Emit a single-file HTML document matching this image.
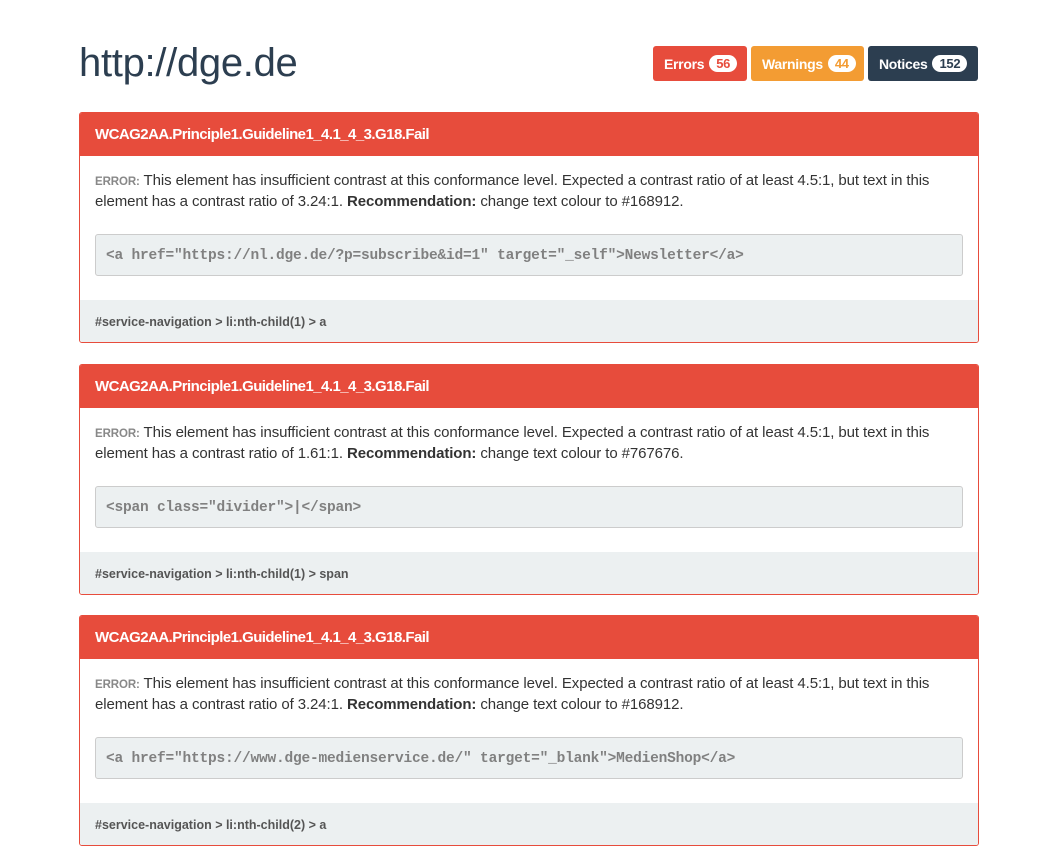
<!DOCTYPE html>
<html><head><meta charset="utf-8"><style>
*{box-sizing:border-box;margin:0;padding:0}
body{width:1048px;height:860px;background:#fff;font-family:"Liberation Sans",sans-serif;color:#333;position:relative;overflow:hidden}
h1{position:absolute;left:79px;top:41px;font-size:40px;font-weight:normal;color:#2c3e50;letter-spacing:-0.3px}
.badges{position:absolute;top:46px;right:70px;display:flex;gap:4px}
.b{height:35px;border-radius:3px;color:#fff;font-size:14px;font-weight:bold;display:flex;align-items:center;padding:0 11px;letter-spacing:-0.3px}
.b span{background:#fff;border-radius:10px;font-size:13px;padding:1px 7px;margin-left:5px}
.e{background:#e74c3c}.e span{color:#e74c3c}
.w{background:#f39c33}.w span{color:#f39c33}
.n{background:#2c3e50}.n span{color:#2c3e50}
.p{position:absolute;left:79px;width:900px;height:231px;border:1px solid #e74c3c;border-radius:3px;overflow:hidden}
.h{background:#e74c3c;color:#fff;height:43px;padding:0 15px;font-size:15px;font-weight:bold;line-height:43px;letter-spacing:-0.55px}
.t{padding:15px 15px 0;font-size:15px;line-height:20px;height:78px;letter-spacing:-0.1px;white-space:nowrap}
.t .l{color:#888;font-size:11.5px;font-weight:bold}
.c{margin:0 15px;height:42px;background:#ecf0f1;border:1px solid #ccc;border-radius:3px;font-family:"Liberation Mono",monospace;font-size:14.5px;font-weight:bold;color:#808080;line-height:42px;padding:0 10px;letter-spacing:-0.2px}
.f{position:absolute;left:0;right:0;bottom:0;height:42px;background:#ecf0f1;font-size:12.5px;font-weight:bold;color:#555;padding:0 15px;line-height:44px;letter-spacing:0px}
</style></head><body>
<h1>http://dge.de</h1>
<div class="badges">
<div class="b e" style="width:94px">Errors<span>56</span></div>
<div class="b w" style="width:113px">Warnings<span>44</span></div>
<div class="b n" style="width:110px">Notices<span>152</span></div>
</div>
<div class="p" style="top:112px"><div class="h">WCAG2AA.Principle1.Guideline1_4.1_4_3.G18.Fail</div>
<div class="t"><span class="l">ERROR:</span> This element has insufficient contrast at this conformance level. Expected a contrast ratio of at least 4.5:1, but text in this<br>element has a contrast ratio of 3.24:1. <b>Recommendation:</b> change text colour to #168912.</div>
<div class="c">&lt;a href="https://nl.dge.de/?p=subscribe&amp;id=1" target="_self"&gt;Newsletter&lt;/a&gt;</div>
<div class="f">#service-navigation &gt; li:nth-child(1) &gt; a</div></div>
<div class="p" style="top:364px"><div class="h">WCAG2AA.Principle1.Guideline1_4.1_4_3.G18.Fail</div>
<div class="t"><span class="l">ERROR:</span> This element has insufficient contrast at this conformance level. Expected a contrast ratio of at least 4.5:1, but text in this<br>element has a contrast ratio of 1.61:1. <b>Recommendation:</b> change text colour to #767676.</div>
<div class="c">&lt;span class="divider"&gt;|&lt;/span&gt;</div>
<div class="f">#service-navigation &gt; li:nth-child(1) &gt; span</div></div>
<div class="p" style="top:615px"><div class="h">WCAG2AA.Principle1.Guideline1_4.1_4_3.G18.Fail</div>
<div class="t"><span class="l">ERROR:</span> This element has insufficient contrast at this conformance level. Expected a contrast ratio of at least 4.5:1, but text in this<br>element has a contrast ratio of 3.24:1. <b>Recommendation:</b> change text colour to #168912.</div>
<div class="c">&lt;a href="https://www.dge-medienservice.de/" target="_blank"&gt;MedienShop&lt;/a&gt;</div>
<div class="f">#service-navigation &gt; li:nth-child(2) &gt; a</div></div>
</body></html>
